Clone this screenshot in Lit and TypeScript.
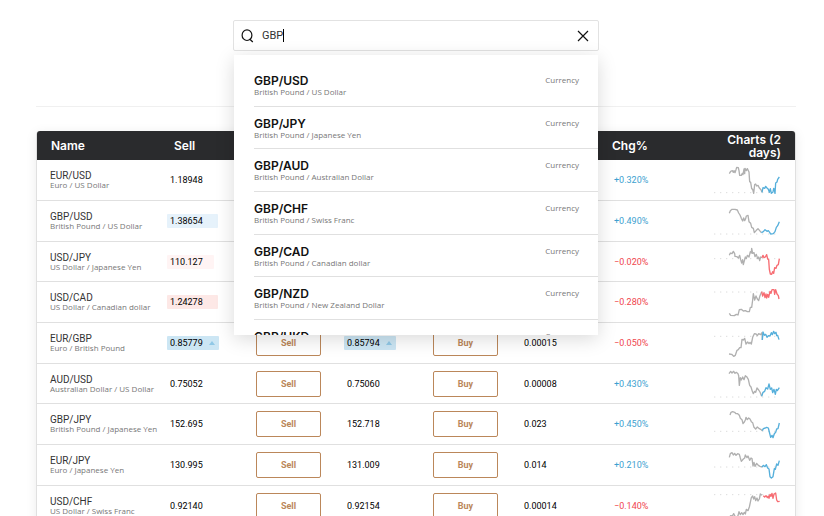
import { LitElement, html, css, svg } from "lit";
import { customElement, property, state } from "lit/decorators.js";
import { classMap } from "lit/directives/class-map.js";

type Flash = "" | "up-faint" | "down-faint" | "down" | "up";

interface Spark {
  top: number;
  base: number;
  past: string;
  today: string;
}

interface Quote {
  pair: string;
  name: string;
  sell: string;
  buy: string;
  spread: string;
  change: string;
  sellFlash?: Flash;
  buyFlash?: Flash;
  spark: Spark;
}

const QUOTES: Quote[] = [
  {
    pair: "EUR/USD", name: "Euro / US Dollar", sell: "1.18948", buy: "1.18957", spread: "0.00009", change: "+0.320%",
    spark: {
      top: 0, base: 95,
      past: "88,38 92,31 97,29 100,34 102,29 105,35 108,26 110,19 115,20 117,29 119,43 124,43 127,37 129,41 132,24 134,38 135,22 139,29 142,23 147,33 149,62 152,64 155,83 158,85 161,97 164,71 167,69 170,75 174,73 178,81 183,86 186,94",
      today: "186,94 189,80 194,82 197,76 201,81 205,85 208,94 211,83 214,97 219,93 221,82 223,85 225,97 227,66 231,63 233,55 238,48",
    },
  },
  {
    pair: "GBP/USD", name: "British Pound / US Dollar", sell: "1.38654", buy: "1.38668", spread: "0.00014", change: "+0.490%", sellFlash: "up-faint",
    spark: {
      top: 121, base: 217,
      past: "88,155 91,147 96,143 105,143 112,145 116,154 120,160 124,170 128,178 131,169 134,177 137,171 139,163 144,161 147,180 152,185 155,197 160,200 163,213 169,206 174,201 179,207 184,213",
      today: "184,213 190,210 195,204 201,209 205,207 209,212 212,217 220,216 225,210 229,197 233,192 238,180",
    },
  },
  {
    pair: "USD/JPY", name: "US Dollar / Japanese Yen", sell: "110.127", buy: "110.138", spread: "0.011", change: "-0.020%", sellFlash: "down-faint",
    spark: {
      top: 3, base: 53,
      past: "88,43 91,36 96,38 100,31 104,38 105,46 111,47 115,51 119,43 122,56 125,66 128,56 130,71 134,56 136,48 139,53 142,43 147,48 151,32 154,36 155,22 158,37 162,35 165,47 169,40 173,53 176,48 179,59 182,48 186,50",
      today: "186,50 189,43 192,50 196,48 200,41 203,54 206,56 208,85 211,99 215,100 218,92 221,97 224,80 228,82 231,73 235,71 238,53",
    },
  },
  {
    pair: "USD/CAD", name: "US Dollar / Canadian dollar", sell: "1.24278", buy: "1.24305", spread: "0.00027", change: "-0.280%", sellFlash: "down",
    spark: {
      top: 125, base: 152,
      past: "88,216 92,222 103,223 109,219 114,221 118,205 124,204 130,209 136,208 142,211 148,211 151,198 155,198 158,176 160,157 164,176 168,164 172,173 176,178 180,163 185,151",
      today: "185,151 188,164 192,154 195,169 198,158 200,170 203,159 206,168 210,150 213,156 216,145 222,145 224,159 227,145 231,158 235,163 237,173",
    },
  },
  {
    pair: "EUR/GBP", name: "Euro / British Pound", sell: "0.85779", buy: "0.85794", spread: "0.00015", change: "-0.050%", sellFlash: "up", buyFlash: "up",
    spark: {
      top: 7, base: 44,
      past: "87,97 95,98 101,104 106,101 111,86 115,84 119,78 123,78 126,53 130,55 134,50 138,67 143,61 147,66 150,62 154,67 158,47 163,36 168,37 172,42 176,36 182,39 186,33 187,55",
      today: "187,55 189,31 193,41 197,38 201,47 205,42 210,43 214,33 217,39 221,29 224,36 228,32 230,42 233,41 237,54",
    },
  },
  {
    pair: "AUD/USD", name: "Australian Dollar / US Dollar", sell: "0.75052", buy: "0.75060", spread: "0.00008", change: "+0.430%",
    spark: {
      top: 127, base: 226,
      past: "87,156 92,149 96,154 101,149 105,155 109,152 114,156 116,162 118,191 121,168 124,175 128,166 132,174 136,162 140,165 145,173 149,191 153,196 157,209 160,216 164,209 167,212 171,199 176,205 180,211 185,224",
      today: "185,224 189,212 194,209 198,198 203,202 207,187 211,203 215,199 218,213 222,203 226,218 229,203 232,207 238,198",
    },
  },
  {
    pair: "GBP/JPY", name: "British Pound / Japanese Yen", sell: "152.695", buy: "152.718", spread: "0.023", change: "+0.450%",
    spark: {
      top: -3, base: 76,
      past: "90,27 93,19 98,17 104,19 108,23 113,23 118,28 121,37 126,41 129,53 133,48 136,42 138,34 142,41 146,36 150,39 154,47 158,50 162,64 167,69 172,63 178,68 182,70 187,74",
      today: "187,74 190,68 196,66 200,64 205,66 208,78 212,94 216,88 219,95 223,83 227,79 230,69 234,68 238,51",
    },
  },
  {
    pair: "EUR/JPY", name: "Euro / Japanese Yen", sell: "130.995", buy: "131.009", spread: "0.014", change: "+0.210%",
    spark: {
      top: 119, base: 182,
      past: "88,153 91,142 96,139 100,146 104,141 108,147 113,142 118,144 121,155 124,165 130,158 134,155 136,146 141,154 144,149 149,162 153,155 156,157 159,179 162,168 165,180 170,171 175,177 180,180 186,182",
      today: "186,182 190,177 195,181 199,175 203,185 207,188 210,211 214,215 219,211 223,187 226,189 230,173 234,177 238,163",
    },
  },
  {
    pair: "USD/CHF", name: "US Dollar / Swiss Franc", sell: "0.92140", buy: "0.92154", spread: "0.00014", change: "-0.140%",
    spark: {
      top: 239, base: 265,
      past: "88,333 92,328 97,329 101,322 105,330 109,334 114,328 117,316 121,325 125,319 129,325 133,318 136,323 139,309 144,313 148,302 151,288 154,274 158,269 161,278 164,271 167,283 171,275 174,284 178,278 181,263 186,267",
      today: "190,268 194,272 198,268 202,274 205,269 207,276 210,264 213,270 216,261 219,276 222,263 227,260 230,281 233,286 239,285",
    },
  },
];

const RESULTS = [
  { pair: "GBP/USD", name: "British Pound / US Dollar" },
  { pair: "GBP/JPY", name: "British Pound / Japanese Yen" },
  { pair: "GBP/AUD", name: "British Pound / Australian Dollar" },
  { pair: "GBP/CHF", name: "British Pound / Swiss Franc" },
  { pair: "GBP/CAD", name: "British Pound / Canadian dollar" },
  { pair: "GBP/NZD", name: "British Pound / New Zealand Dollar" },
  { pair: "GBP/HKD", name: "British Pound / Hong Kong Dollar" },
];

@customElement("spark-line")
export class SparkLine extends LitElement {
  @property({ attribute: false }) data!: Spark;
  @property({ type: Boolean }) down = false;

  static styles = css`
    :host { display: block; }
    svg { display: block; width: 67px; height: 39px; margin-left: auto; }
    .past, .today { fill: none; stroke-width: 4; stroke-linejoin: round; }
    .past { stroke: #b0b0b0; }
    .today { stroke: #55afdb; }
    .today.down { stroke: #f76c72; }
    .base { stroke: #dcdcdc; stroke-width: 3; stroke-dasharray: 4 14; }
  `;

  render() {
    const d = this.data;
    return html`<svg viewBox="42 ${d.top} 201 117" aria-hidden="true">
      ${svg`<line class="base" x1="42" x2="240" y1=${d.base} y2=${d.base}></line>
      <polyline class="past" points=${d.past}></polyline>
      <polyline class=${this.down ? "today down" : "today"} points=${d.today}></polyline>`}
    </svg>`;
  }
}

@customElement("symbol-search")
export class SymbolSearch extends LitElement {
  @state() private query = "GBP";

  static styles = css`
    :host { display: block; position: relative; width: 366px; max-width: 100%; }
    .box {
      box-sizing: border-box; display: flex; align-items: center; height: 31px;
      padding: 0 8px 0 7px; border: 1px solid #e2e2e2; border-radius: 2px; background: #fff;
    }
    .icon { flex: none; width: 13px; height: 14px; margin-right: 8px; }
    .icon, .cross { fill: none; stroke: #111; display: block; }
    input {
      field-sizing: content; min-width: 2px; padding: 0; border: 0; outline: 0; background: none;
      font: 11px/16px Roboto, sans-serif; color: #333; caret-color: transparent;
    }
    .caret { flex: none; width: 1px; height: 13px; background: #000; }
    .clear { margin-left: auto; padding: 0; border: 0; background: none; cursor: pointer; }
    .cross { width: 14px; height: 14px; }
    .menu {
      position: absolute; z-index: 2; top: 35px; left: 1px; right: 1px; height: 280px;
      overflow: hidden; box-sizing: border-box; margin: 0; padding: 9px 0 0 20px; list-style: none;
      background: #fff; box-shadow: 0 4px 18px rgba(0, 0, 0, 0.15);
    }
    .item {
      box-sizing: border-box; display: flex; justify-content: space-between;
      height: 43px; padding: 11px 19px 0 0; border-bottom: 1px solid #e0e0e0;
    }
    .item:nth-child(3n + 2) { height: 42px; }
    .pair { display: block; font-size: 12px; line-height: 12px; font-weight: 600; color: #111; }
    .name, .kind { display: block; font: 8px/10px "Open Sans", sans-serif; color: #777; }
  `;

  private onInput(e: Event) {
    this.query = (e.target as HTMLInputElement).value;
  }

  render() {
    return html`
      <div class="box">
        <svg class="icon" viewBox="0 0 13 14" aria-hidden="true">
          <ellipse cx="6" cy="6.2" rx="4.9" ry="5.3" stroke-width="1.2"></ellipse>
          <path d="M8.6 10 L11.8 13" stroke-width="1.2"></path>
        </svg>
        <input type="text" aria-label="Search symbols" .value=${this.query} @input=${this.onInput} />
        <span class="caret"></span>
        <button class="clear" aria-label="Clear search" @click=${() => (this.query = "")}>
          <svg class="cross" viewBox="0 0 14 14"><path d="M2 2 L12 12 M12 2 L2 12" stroke-width="1.2"></path></svg>
        </button>
      </div>
      <ul class="menu">
        ${RESULTS.map(
          (r) => html`<li class="item">
            <div><span class="pair">${r.pair}</span><span class="name">${r.name}</span></div>
            <span class="kind">Currency</span>
          </li>`
        )}
      </ul>
    `;
  }
}

@customElement("app-root")
export class AppRoot extends LitElement {
  static styles = css`
    :host {
      display: block; height: 100vh; overflow: hidden; box-sizing: border-box;
      padding: 20px 28px 0 36px; background: #fff; color: #333; font-family: Inter, sans-serif;
    }
    header { display: flex; justify-content: center; padding-bottom: 55px; border-bottom: 1px solid #f0f0f0; }
    .card {
      margin-top: 24px; border: 1px solid #e0e0e0; border-top: 0; border-radius: 4px 4px 0 0;
      box-shadow: 0 2px 12px rgba(0, 0, 0, 0.08);
    }
    table { width: 100%; table-layout: fixed; border-collapse: separate; border-spacing: 0; }
    .c-name { width: 130px; }
    .c-quote { width: 89px; }
    .c-action { width: 88px; }
    .c-chart { width: 97px; }
    th {
      box-sizing: border-box; height: 29px; padding: 0 2px; background: #2a2b2d; color: #fff;
      text-align: left; font-size: 12px; line-height: 13px; font-weight: 600;
    }
    th:first-child { border-top-left-radius: 3px; }
    th:last-child { border-top-right-radius: 3px; text-align: right; }
    th.price { padding-left: 7px; }
    td {
      box-sizing: border-box; height: 41px; padding: 0; border-bottom: 1px solid #e0e0e0;
      vertical-align: middle; font: 9px/14px Roboto, sans-serif;
    }
    tr:nth-child(3n) td { height: 40px; }
    th.first, td.first { padding: 0 0 0 13px; }
    th.first { padding-left: 14px; }
    th.last, td.last { padding: 0 14px 0 0; }
    .pair { display: block; font-size: 10px; line-height: 10px; }
    .name { display: block; font: 8px/8px "Open Sans", sans-serif; color: #777; white-space: nowrap; }
    .value { display: inline-block; padding: 0 3px; border-radius: 1px; color: #000; vertical-align: middle; }
    .value.up-faint { background: #e6f2fb; padding-right: 15px; }
    .value.down-faint { background: #fff4f4; padding-right: 11px; }
    .value.down { background: #fde8e6; padding-right: 15px; }
    .value.up { background: #cce6f4; }
    .tick {
      display: inline-block; margin: 0 1px 1px 6px; border: 3px solid transparent; border-top: 0;
      border-bottom: 4px solid #90c8e6;
    }
    .change { padding-left: 4px; color: #3d9fd0; }
    .change.down { color: #f0464e; }
    .trade {
      display: block; width: 65px; height: 26px; padding: 0; border: 1px solid #bb875a; border-radius: 2px;
      background: #fff; color: #bb875a; font: 700 9px/12px Roboto, sans-serif; cursor: pointer;
    }
  `;

  private value(text: string, flash: Flash = "") {
    return html`<span class=${classMap({ value: true, [flash || "steady"]: true })}
      >${text}${flash === "up" ? html`<i class="tick"></i>` : ""}</span>`;
  }

  render() {
    return html`
      <header><symbol-search></symbol-search></header>
      <main class="card">
        <table>
          <colgroup>
            <col class="c-name" />
            <col class="c-quote" />
            <col class="c-action" />
            <col class="c-quote" />
            <col class="c-action" />
            <col class="c-quote" />
            <col class="c-action" />
            <col class="c-chart" />
          </colgroup>
          <thead>
            <tr>
              <th class="first">Name</th>
              <th class="price">Sell</th>
              <th></th>
              <th class="price">Buy</th>
              <th></th>
              <th>Spread</th>
              <th>Chg%</th>
              <th class="last">Charts (2 days)</th>
            </tr>
          </thead>
          <tbody>
            ${QUOTES.map((q) => {
              const down = q.change.startsWith("-");
              return html`<tr>
                <td class="first"><span class="pair">${q.pair}</span><span class="name">${q.name}</span></td>
                <td>${this.value(q.sell, q.sellFlash)}</td>
                <td><button class="trade">Sell</button></td>
                <td>${this.value(q.buy, q.buyFlash)}</td>
                <td><button class="trade">Buy</button></td>
                <td>${this.value(q.spread)}</td>
                <td><span class=${classMap({ change: true, down })}>${q.change.replace("-", "\u2212")}</span></td>
                <td class="last"><spark-line .data=${q.spark} ?down=${down && q.pair !== "EUR/GBP"}></spark-line></td>
              </tr>`;
            })}
          </tbody>
        </table>
      </main>
    `;
  }
}
